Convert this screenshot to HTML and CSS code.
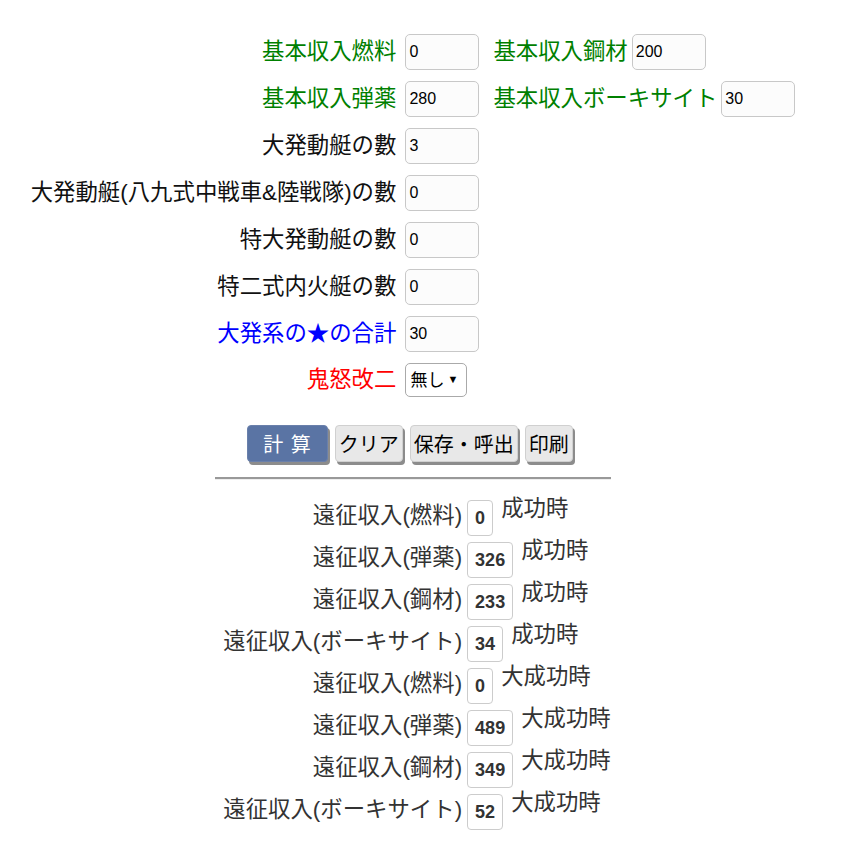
FILE: index.html
```html
<!DOCTYPE html>
<html lang="ja">
<head>
  <meta charset="UTF-8">
  <title>遠征収入計算</title>
  <meta name="viewport" content="width=device-width, initial-scale=1.0">
  <link rel="stylesheet" href="styles.css">
</head>
<body>
  <div class="wrap">
    <!-- 入力 -->
    <div class="form">
      <label class="lbl green" for="fuel">基本収入燃料</label>
      <input class="num" id="fuel" type="text" value="0">
      <div class="extra">
        <label class="lbl green" for="steel">基本収入鋼材</label>
        <input class="num" id="steel" type="text" value="200">
      </div>

      <label class="lbl green" for="ammo">基本収入弾薬</label>
      <input class="num" id="ammo" type="text" value="280">
      <div class="extra">
        <label class="lbl green" for="baux">基本収入ボーキサイト</label>
        <input class="num" id="baux" type="text" value="30">
      </div>

      <label class="lbl" for="daihatsu">大発動艇の數</label>
      <input class="num" id="daihatsu" type="text" value="3">
      <div></div>

      <label class="lbl" for="daihatsu89">大発動艇(八九式中戦車&amp;陸戦隊)の數</label>
      <input class="num" id="daihatsu89" type="text" value="0">
      <div></div>

      <label class="lbl" for="tokudai">特大発動艇の數</label>
      <input class="num" id="tokudai" type="text" value="0">
      <div></div>

      <label class="lbl" for="kami">特二式内火艇の數</label>
      <input class="num" id="kami" type="text" value="0">
      <div></div>

      <label class="lbl blue" for="stars">大発系の★の合計</label>
      <input class="num" id="stars" type="text" value="30">
      <div></div>

      <label class="lbl red" for="kinu">鬼怒改二</label>
      <span class="sel">
        <select id="kinu">
          <option>無し</option>
          <option>有り</option>
        </select>
      </span>
      <div></div>
    </div>

    <div class="buttons">
      <button class="btn main" id="calc">計 算</button>
      <button class="btn" id="clear">クリア</button>
      <button class="btn" id="save">保存・呼出</button>
      <button class="btn" onclick="window.print()">印刷</button>
    </div>

    <hr class="line">

    <!-- 結果 -->
    <div class="result" id="result"></div>
  </div>

  <script>
    const rows = [
      ['遠征収入(燃料)', 0, '成功時'],
      ['遠征収入(弾薬)', 326, '成功時'],
      ['遠征収入(鋼材)', 233, '成功時'],
      ['遠征収入(ボーキサイト)', 34, '成功時'],
      ['遠征収入(燃料)', 0, '大成功時'],
      ['遠征収入(弾薬)', 489, '大成功時'],
      ['遠征収入(鋼材)', 349, '大成功時'],
      ['遠征収入(ボーキサイト)', 52, '大成功時']
    ];

    const result = document.getElementById('result');
    rows.forEach(row => {
      const name = document.createElement('div');
      name.className = 'res-name';
      name.textContent = row[0];

      const cell = document.createElement('div');
      cell.className = 'res-cell';
      cell.innerHTML = `<span class="res-val">${row[1]}</span><span class="res-note">${row[2]}</span>`;

      result.appendChild(name);
      result.appendChild(cell);
    });
  </script>
</body>
</html>
```

FILE: styles.css
```css
* {
  box-sizing: border-box;
}

body {
  margin: 8px;
  font-family: 'Liberation Sans', 'Noto Sans CJK JP', sans-serif;
  color: #111;
  background: #fff;
}

.wrap {
  width: 810px;
  padding-top: 26px;
}

.form {
  display: grid;
  grid-template-columns: auto auto auto;
  justify-content: center;
  align-items: center;
  row-gap: 11px;
}

.lbl {
  font-size: 22.4px;
  line-height: 26px;
  text-align: right;
  padding-right: 9px;
  white-space: nowrap;
}

.extra {
  display: flex;
  align-items: center;
  padding-left: 14px;
}

.extra .lbl {
  padding-right: 4px;
}

.green { color: #008000; }
.blue { color: #0000ff; }
.red { color: #ff0000; }

.num {
  width: 74px;
  height: 36px;
  padding: 0 3px;
  font-family: 'Liberation Sans', sans-serif;
  font-size: 16px;
  color: #000;
  background: #fcfcfc;
  border: 1px solid #c8c8c8;
  border-radius: 5px;
  outline: none;
}

.sel {
  position: relative;
  display: inline-block;
  width: 62px;
  justify-self: start;
}

.sel select {
  appearance: none;
  -webkit-appearance: none;
  width: 62px;
  height: 34px;
  padding: 0 0 0 4px;
  font-family: 'Liberation Sans', 'Noto Sans CJK JP', sans-serif;
  font-size: 17px;
  color: #000;
  background: #fff;
  border: 1px solid #aaa;
  border-radius: 5px;
  outline: none;
}

.sel::after {
  content: '▼';
  position: absolute;
  right: 9px;
  top: 10px;
  font-size: 11px;
  color: #000;
  pointer-events: none;
}

.buttons {
  display: flex;
  justify-content: center;
  gap: 7px;
  margin-top: 28px;
  padding-right: 6px;
}

.btn {
  height: 37px;
  padding: 0 3px;
  font-family: 'Liberation Sans', 'Noto Sans CJK JP', sans-serif;
  font-size: 20px;
  color: #000;
  background: #e8e8e8;
  border: 1px solid #d0d0d0;
  border-radius: 4px;
  box-shadow: 2px 3px 0 #8c8c8c;
  cursor: pointer;
}

.btn.main {
  padding: 0 15px;
  color: #fff;
  letter-spacing: 1px;
  background: #5a74a4;
  border-color: #6a80ab;
}

.line {
  width: 396px;
  margin: 15px auto 0;
  border: none;
  border-top: 2px solid #999;
  border-bottom: 1px solid #eee;
  height: 0;
}

.result {
  display: grid;
  grid-template-columns: auto auto;
  justify-content: center;
  row-gap: 6px;
  margin-top: 20px;
  padding-left: 8px;
  color: #333;
}

.res-name {
  font-size: 22.4px;
  line-height: 26px;
  text-align: right;
  padding-right: 5px;
  align-self: center;
  white-space: nowrap;
  margin-top: -4px;
}

.res-cell {
  display: flex;
  align-items: flex-start;
}

.res-val {
  display: inline-block;
  height: 36px;
  line-height: 34px;
  padding: 0 7px;
  font-size: 18px;
  font-weight: bold;
  background: #fff;
  border: 1px solid #ccc;
  border-radius: 4px;
}

.res-note {
  font-size: 22.4px;
  line-height: 26px;
  margin-left: 8px;
  margin-top: -4px;
  white-space: nowrap;
}
```
